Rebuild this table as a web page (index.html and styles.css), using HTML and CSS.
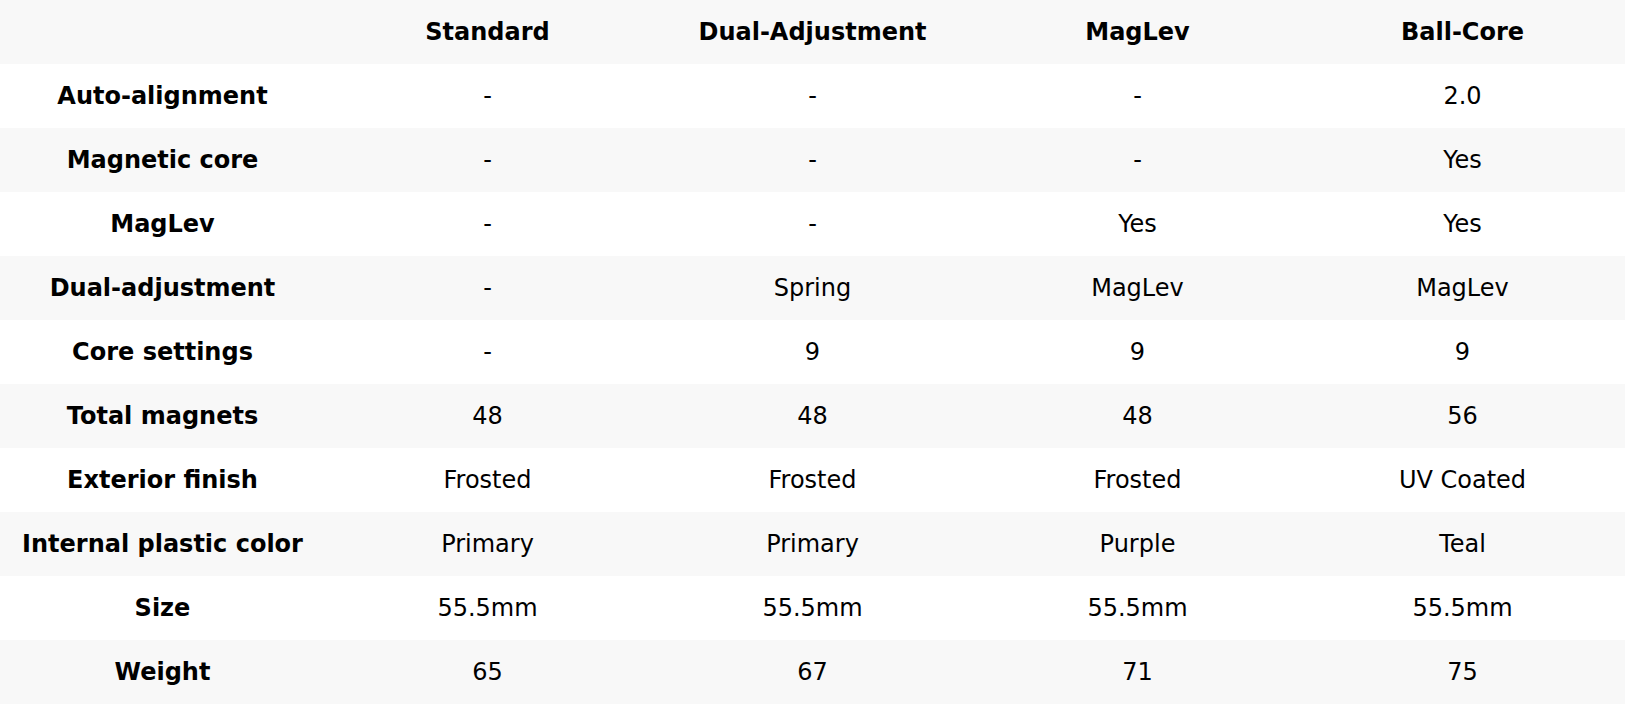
FILE: index.html
```html
<!DOCTYPE html>
<html>
<head>
<meta charset="utf-8">
<link rel="stylesheet" href="styles.css">
</head>
<body>
<table class="compare">
  <thead>
    <tr><th></th><th>Standard</th><th>Dual-Adjustment</th><th>MagLev</th><th>Ball-Core</th></tr>
  </thead>
  <tbody>
    <tr><th>Auto-alignment</th><td>-</td><td>-</td><td>-</td><td>2.0</td></tr>
    <tr><th>Magnetic core</th><td>-</td><td>-</td><td>-</td><td>Yes</td></tr>
    <tr><th>MagLev</th><td>-</td><td>-</td><td>Yes</td><td>Yes</td></tr>
    <tr><th>Dual-adjustment</th><td>-</td><td>Spring</td><td>MagLev</td><td>MagLev</td></tr>
    <tr><th>Core settings</th><td>-</td><td>9</td><td>9</td><td>9</td></tr>
    <tr><th>Total magnets</th><td>48</td><td>48</td><td>48</td><td>56</td></tr>
    <tr><th>Exterior finish</th><td>Frosted</td><td>Frosted</td><td>Frosted</td><td>UV Coated</td></tr>
    <tr><th>Internal plastic color</th><td>Primary</td><td>Primary</td><td>Purple</td><td>Teal</td></tr>
    <tr><th>Size</th><td>55.5mm</td><td>55.5mm</td><td>55.5mm</td><td>55.5mm</td></tr>
    <tr><th>Weight</th><td>65</td><td>67</td><td>71</td><td>75</td></tr>
  </tbody>
</table>
</body>
</html>
```

FILE: styles.css
```css
html, body {
  margin: 0;
  padding: 0;
  background: #ffffff;
}
body {
  font-family: "DejaVu Sans", sans-serif;
  font-size: 24px;
  color: #000;
}
.compare {
  width: 100%;
  border-collapse: collapse;
  table-layout: fixed;
}
.compare th,
.compare td {
  height: 64px;
  padding: 0;
  text-align: center;
  vertical-align: middle;
}
.compare th {
  font-weight: bold;
}
.compare td {
  font-weight: normal;
}
.compare thead tr,
.compare tbody tr:nth-child(even) {
  background: #f8f8f8;
}
```
